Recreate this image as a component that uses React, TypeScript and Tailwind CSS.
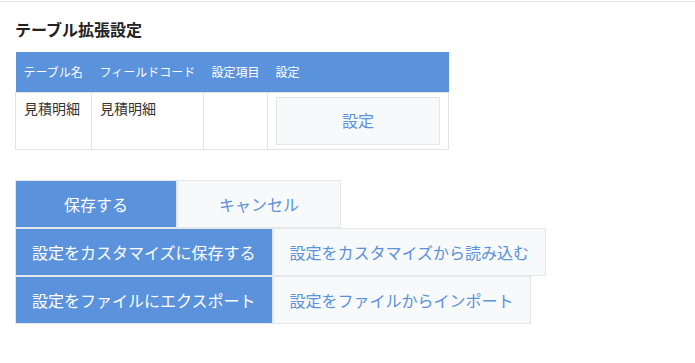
const btn = "h-[48px] px-[16px] text-[16px] border border-[#e3e7ea] whitespace-nowrap";
const blue = `${btn} bg-[#5b92dc] text-white`;
const light = `${btn} bg-[#f7f9fa] text-[#5b92dc]`;

const App = () => {
  return (
    <div
      className="min-h-screen bg-white text-[#333]"
      style={{ fontFamily: '"Noto Sans CJK JP", "Noto Sans", sans-serif' }}
    >
      <div className="mt-px border-t border-[#e3e3e3] px-[15px]">
        {/* Title */}
        <h2 className="pt-[15px] text-[16px] leading-[24px] font-bold text-[#222] mb-[11px]">
          テーブル拡張設定
        </h2>

        {/* Table */}
        <table className="w-[434px] border-collapse">
          <thead>
            <tr className="bg-[#5b92dc] text-white text-[12px] h-[40px] whitespace-nowrap">
              <th className="w-[77px] px-[8px] text-left font-normal">テーブル名</th>
              <th className="w-[112px] px-[8px] text-left font-normal">フィールドコード</th>
              <th className="w-[64px] px-[8px] text-left font-normal">設定項目</th>
              <th className="px-[8px] text-left font-normal">設定</th>
            </tr>
          </thead>
          <tbody>
            <tr className="text-[14px] leading-[21px] align-top">
              <td className="border border-[#e3e3e3] px-[8px] py-[5px]">見積明細</td>
              <td className="border border-[#e3e3e3] px-[8px] py-[5px]">見積明細</td>
              <td className="border border-[#e3e3e3] px-[8px] py-[5px]"></td>
              <td className="border border-[#e3e3e3] pl-[8px] pr-[8px] py-[4px]">
                <button className="block w-[164px] h-[48px] bg-[#f7f9fa] border border-[#e3e7ea] text-[#5b92dc] text-[16px]">
                  設定
                </button>
              </td>
            </tr>
          </tbody>
        </table>

        {/* Actions */}
        <div className="mt-[30px] flex flex-col">
          <div className="flex">
            <button className={`min-w-[162px] ${blue}`}>保存する</button>
            <button className={`min-w-[164px] ${light}`}>キャンセル</button>
          </div>
          <div className="flex">
            <button className={blue}>設定をカスタマイズに保存する</button>
            <button className={light}>設定をカスタマイズから読み込む</button>
          </div>
          <div className="flex">
            <button className={blue}>設定をファイルにエクスポート</button>
            <button className={light}>設定をファイルからインポート</button>
          </div>
        </div>
      </div>
    </div>
  );
};

export default App;
